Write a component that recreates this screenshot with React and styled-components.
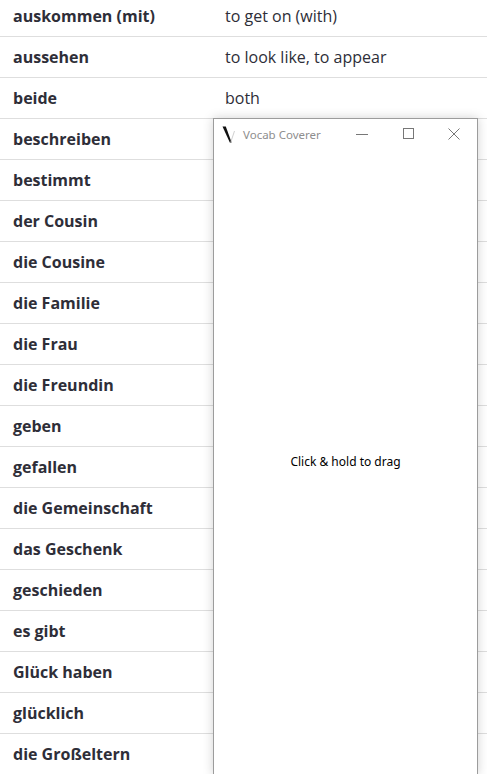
import React from 'react';
import styled, { createGlobalStyle } from 'styled-components';

const GlobalStyle = createGlobalStyle`
  html, body {
    margin: 0;
    padding: 0;
    background: #fff;
    overflow: hidden;
  }
  body {
    font-family: "Open Sans", "Noto Sans", sans-serif;
  }
`;

const Page = styled.div`
  position: relative;
  width: 487px;
  height: 774px;
  overflow: hidden;
`;

const Table = styled.div`
  margin-top: -4px;
  display: flex;
  flex-direction: column;
`;

const Row = styled.div`
  display: grid;
  grid-template-columns: 213px 1fr;
  align-items: center;
  height: 40px;
  border-bottom: 1px solid #dedede;
  font-size: 16px;
  color: #2e2e38;
`;

const Term = styled.div`
  padding-left: 13px;
  font-weight: 700;
`;

const Meaning = styled.div`
  padding-left: 12px;
  font-weight: 400;
`;

const Window = styled.div`
  position: absolute;
  left: 213px;
  top: 118px;
  width: 263px;
  height: 655px;
  background: #fff;
  border: 1px solid #9c9c9c;
  box-shadow: 0 0 10px rgba(0, 0, 0, 0.18);
  display: flex;
  flex-direction: column;
`;

const TitleBar = styled.div`
  height: 30px;
  display: flex;
  align-items: center;
  padding-left: 8px;
`;

const AppIcon = styled.svg`
  width: 13px;
  height: 17px;
  flex-shrink: 0;
`;

const Title = styled.span`
  margin-left: 8px;
  font-family: "Noto Sans", "Open Sans", sans-serif;
  font-size: 11.5px;
  color: #8e8e8e;
  flex: 1;
  white-space: nowrap;
`;

const Controls = styled.div`
  display: flex;
  height: 100%;
`;

const ControlButton = styled.div`
  width: 46px;
  height: 100%;
  display: flex;
  align-items: center;
  justify-content: center;
`;

const Body = styled.div`
  flex: 1;
  display: flex;
  align-items: center;
  justify-content: center;
  font-family: "Noto Sans", "Open Sans", sans-serif;
  font-size: 12px;
  color: #000;
  padding-bottom: 1px;
`;

const words = [
  ['auskommen (mit)', 'to get on (with)'],
  ['aussehen', 'to look like, to appear'],
  ['beide', 'both'],
  ['beschreiben', 'to describe'],
  ['bestimmt', 'certain(ly)'],
  ['der Cousin', 'cousin (male)'],
  ['die Cousine', 'cousin (female)'],
  ['die Familie', 'family'],
  ['die Frau', 'woman, wife'],
  ['die Freundin', 'friend (female)'],
  ['geben', 'to give'],
  ['gefallen', 'to like'],
  ['die Gemeinschaft', 'community'],
  ['das Geschenk', 'present'],
  ['geschieden', 'divorced'],
  ['es gibt', 'there is, there are'],
  ['Glück haben', 'to be lucky'],
  ['glücklich', 'happy'],
  ['die Großeltern', 'grandparents'],
];

const App = () => {
  return (
    <Page>
      <GlobalStyle />
      <Table>
        {words.map(([de, en]) => (
          <Row key={de}>
            <Term>{de}</Term>
            <Meaning>{en}</Meaning>
          </Row>
        ))}
      </Table>

      <Window>
        <TitleBar>
          <AppIcon viewBox="0 0 13 17">
            <polygon points="0.5,0.5 3.8,0.5 9.6,16.5 7.8,16.5" fill="#111" />
            <line x1="8.8" y1="16" x2="12.5" y2="5" stroke="#c4c4c4" strokeWidth="0.8" />
          </AppIcon>
          <Title>Vocab Coverer</Title>
          <Controls>
            <ControlButton>
              <svg width="12" height="12" viewBox="0 0 12 12">
                <line x1="0" y1="6.5" x2="12" y2="6.5" stroke="#777" strokeWidth="1" />
              </svg>
            </ControlButton>
            <ControlButton>
              <svg width="12" height="12" viewBox="0 0 12 12">
                <rect x="1.5" y="0.5" width="10" height="10" fill="none" stroke="#777" strokeWidth="1" />
              </svg>
            </ControlButton>
            <ControlButton>
              <svg width="12" height="12" viewBox="0 0 12 12">
                <path d="M0.5 0.5 L11.5 11.5 M11.5 0.5 L0.5 11.5" stroke="#777" strokeWidth="1" />
              </svg>
            </ControlButton>
          </Controls>
        </TitleBar>
        <Body>Click &amp; hold to drag</Body>
      </Window>
    </Page>
  );
};

export default App;
